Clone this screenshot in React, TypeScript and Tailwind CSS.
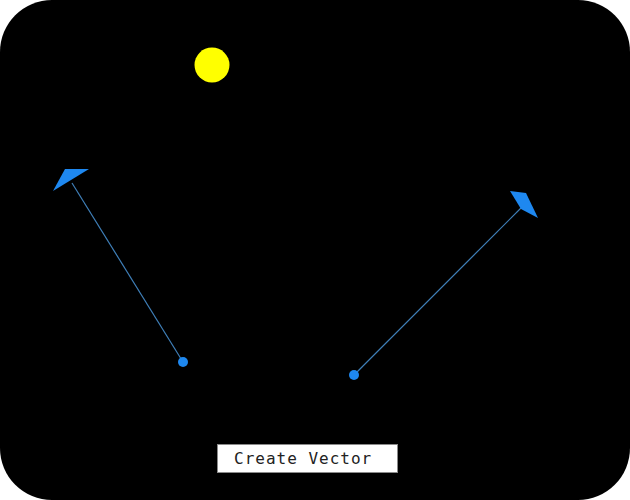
import React from "react"

type Vec = {
  from: [number, number]
  to: [number, number]
  head: string
}

const vectors: Vec[] = [
  { from: [183, 362], to: [72, 183], head: "53,191 65,169 89,169" },
  { from: [354, 375], to: [524, 205], head: "510,191 526,193 538,218 521,209" },
]

function Scene() {
  return (
    <svg
      className="absolute inset-0"
      width={630}
      height={500}
      viewBox="0 0 630 500"
    >
      <circle cx={212} cy={65} r={17.5} fill="#ffff00" />
      {vectors.map((v, i) => (
        <g key={i}>
          <line
            x1={v.from[0]}
            y1={v.from[1]}
            x2={v.to[0]}
            y2={v.to[1]}
            stroke="#3f7fb8"
            strokeWidth={1.2}
          />
          <polygon points={v.head} fill="#1e88f0" />
          <circle cx={v.from[0]} cy={v.from[1]} r={5} fill="#1e88f0" />
        </g>
      ))}
    </svg>
  )
}

export default function App() {
  return (
    <div className="h-[500px] w-[630px] bg-white">
      <div className="relative flex h-full w-full flex-col items-center justify-end rounded-[52px] bg-black pb-[27px] pr-[15px]">
        <Scene />
        <button className="relative h-[29px] w-[181px] border border-[#8a8a8a] bg-white pl-[16px] text-left font-['DejaVu_Sans_Mono',monospace] text-[16px] tracking-[1px] text-[#222]">
          Create Vector
        </button>
      </div>
    </div>
  )
}
